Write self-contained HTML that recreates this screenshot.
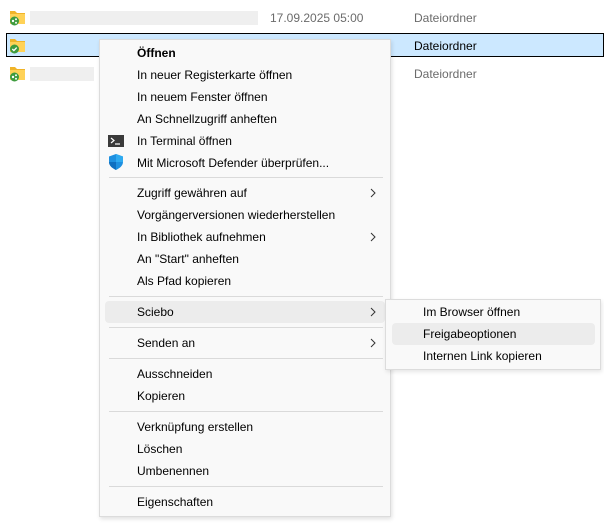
<!DOCTYPE html>
<html><head><meta charset="utf-8"><style>
*{margin:0;padding:0;box-sizing:border-box}
body{width:604px;height:532px;background:#fff;position:relative;overflow:hidden;font-family:"Segoe UI","Liberation Sans",sans-serif;font-size:12px;color:#000}
.a{position:absolute;white-space:nowrap}
.g{color:#6b6b6b}
.menu{position:absolute;left:99px;top:39px;width:292px;height:478px;background:#f9f9f9;border:1px solid #dcdcdc;box-shadow:1px 2px 4px rgba(0,0,0,.12)}
.it{position:absolute;left:37px;line-height:16px}
.sep{position:absolute;left:9px;width:274px;height:1px;background:#dadada}
.ch{position:absolute;left:270px}
.sub{position:absolute;left:385px;top:299px;width:216px;height:71px;background:#f9f9f9;border:1px solid #dcdcdc;box-shadow:1px 2px 4px rgba(0,0,0,.1)}
</style></head><body>
<svg class="a" style="left:9px;top:9px" width="18" height="18"><path d="M1 2h5l2 2h8v11H1z" fill="#f0b429"/><path d="M1 5h15v10H1z" fill="#ffd257"/><circle cx="5.5" cy="12" r="4.5" fill="#3e9b3e"/><circle cx="4" cy="12" r="1.2" fill="#fff"/><circle cx="7" cy="10.3" r="1" fill="#fff"/><circle cx="7" cy="13.7" r="1" fill="#fff"/></svg>
<div class="a" style="left:30px;top:11px;width:228px;height:14px;background:#efefef"></div>
<div class="a g" style="left:270px;top:11px">17.09.2025 05:00</div>
<div class="a g" style="left:414px;top:11px">Dateiordner</div>
<div class="a" style="left:6px;top:33px;width:598px;height:24px;background:#cce8ff;border:1px solid #000"></div>
<svg class="a" style="left:9px;top:37px" width="18" height="18"><path d="M1 2h5l2 2h8v11H1z" fill="#f0b429"/><path d="M1 5h15v10H1z" fill="#ffd257"/><circle cx="5.5" cy="12" r="4.5" fill="#3e9b3e"/><path d="M3.3 12l1.6 1.6 2.8-3" stroke="#fff" stroke-width="1.3" fill="none"/></svg>
<div class="a" style="left:414px;top:39px">Dateiordner</div>
<svg class="a" style="left:9px;top:65px" width="18" height="18"><path d="M1 2h5l2 2h8v11H1z" fill="#f0b429"/><path d="M1 5h15v10H1z" fill="#ffd257"/><circle cx="5.5" cy="12" r="4.5" fill="#3e9b3e"/><circle cx="4" cy="12" r="1.2" fill="#fff"/><circle cx="7" cy="10.3" r="1" fill="#fff"/><circle cx="7" cy="13.7" r="1" fill="#fff"/></svg>
<div class="a" style="left:30px;top:67px;width:64px;height:14px;background:#efefef"></div>
<div class="a g" style="left:414px;top:67px">Dateiordner</div>

<div class="menu">
<div class="it" style="top:5px;font-weight:bold">Öffnen</div>
<div class="it" style="top:27px">In neuer Registerkarte öffnen</div>
<div class="it" style="top:49px">In neuem Fenster öffnen</div>
<div class="it" style="top:71px">An Schnellzugriff anheften</div>
<svg class="a" style="left:8px;top:95px" width="16" height="12"><rect width="16" height="12" fill="#3a3a3a"/><path d="M3 3l3 2.5L3 8" stroke="#fff" stroke-width="1.2" fill="none"/><path d="M7 9h5" stroke="#fff" stroke-width="1.2"/></svg>
<div class="it" style="top:93px">In Terminal öffnen</div>
<svg class="a" style="left:9px;top:114px" width="14" height="16"><path d="M7 0L14 2.5V8C14 12 10 14.5 7 16C4 14.5 0 12 0 8V2.5z" fill="#1e90e0"/><path d="M7 0L14 2.5V8H7z" fill="#2eaaf0"/><path d="M0 8h7v8C4 14.5 0 12 0 8z" fill="#0e6fc0"/></svg>
<div class="it" style="top:115px">Mit Microsoft Defender überprüfen...</div>
<div class="sep" style="top:137px"></div>
<div class="it" style="top:145px">Zugriff gewähren auf</div><svg class="ch" style="top:148px" width="6" height="10"><path d="M1 1l4 4-4 4" stroke="#333" fill="none"/></svg>
<div class="it" style="top:167px">Vorgängerversionen wiederherstellen</div>
<div class="it" style="top:189px">In Bibliothek aufnehmen</div><svg class="ch" style="top:192px" width="6" height="10"><path d="M1 1l4 4-4 4" stroke="#333" fill="none"/></svg>
<div class="it" style="top:211px">An "Start" anheften</div>
<div class="it" style="top:233px">Als Pfad kopieren</div>
<div class="sep" style="top:256px"></div>
<div class="a" style="left:5px;top:261px;width:280px;height:22px;background:#ececec;border-radius:4px"></div>
<div class="it" style="top:264px">Sciebo</div><svg class="ch" style="top:267px" width="6" height="10"><path d="M1 1l4 4-4 4" stroke="#333" fill="none"/></svg>
<div class="sep" style="top:287px"></div>
<div class="it" style="top:295px">Senden an</div><svg class="ch" style="top:298px" width="6" height="10"><path d="M1 1l4 4-4 4" stroke="#333" fill="none"/></svg>
<div class="sep" style="top:318px"></div>
<div class="it" style="top:326px">Ausschneiden</div>
<div class="it" style="top:348px">Kopieren</div>
<div class="sep" style="top:371px"></div>
<div class="it" style="top:379px">Verknüpfung erstellen</div>
<div class="it" style="top:401px">Löschen</div>
<div class="it" style="top:423px">Umbenennen</div>
<div class="sep" style="top:446px"></div>
<div class="it" style="top:454px">Eigenschaften</div>
</div>

<div class="sub">
<div class="a" style="left:6px;top:23px;width:203px;height:22px;background:#ececec;border-radius:4px"></div>
<div class="it" style="top:4px">Im Browser öffnen</div>
<div class="it" style="top:26px">Freigabeoptionen</div>
<div class="it" style="top:48px">Internen Link kopieren</div>
</div>
</body></html>
